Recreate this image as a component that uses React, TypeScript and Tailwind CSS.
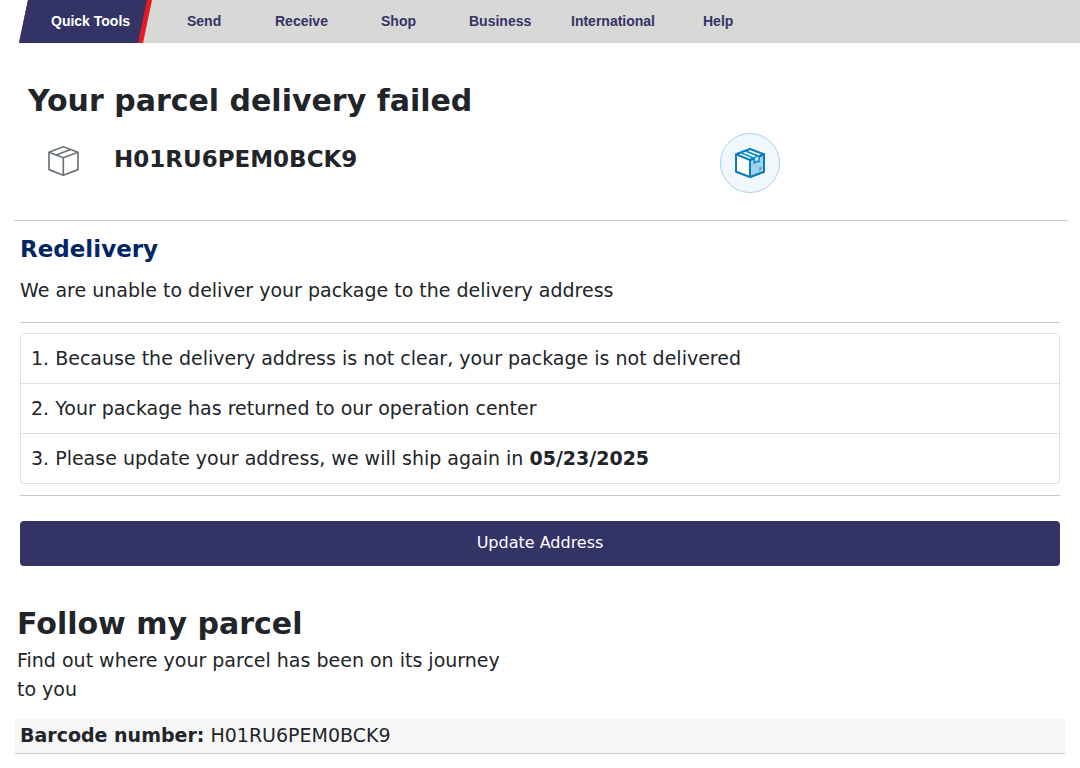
import React from "react";

const trackingNumber = "H01RU6PEM0BCK9";

const menuItems = ["Send", "Receive", "Shop", "Business", "International", "Help"];

const notices = [
  { id: 1, text: "Because the delivery address is not clear, your package is not delivered" },
  { id: 2, text: "Your package has returned to our operation center" },
  { id: 3, text: "Please update your address, we will ship again in", date: "05/23/2025" },
];

function BoxIcon() {
  return (
    <svg width="32" height="32" viewBox="0 0 32 32" fill="none" stroke="#6c7379" strokeWidth="1.7" strokeLinejoin="round" aria-hidden="true">
      <path d="M16.3 1.7 31 7.2V24.6L16.3 30.2 2 24.6V7.2Z" />
      <path d="M2 7.2 16.3 12.8 31 7.2M16.3 12.8V30.2" />
      <path d="M9.2 10 23.6 4.5" />
    </svg>
  );
}

function ParcelIcon() {
  return (
    <svg width="32" height="32" viewBox="0 0 32 32" fill="none" stroke="#0b7cbb" strokeWidth="2" strokeLinejoin="round" aria-hidden="true">
      <path d="M16 2 30 7.3V24.7L16 30 2 24.7V7.3Z" fill="#fff" />
      <path d="M16 13 30 7.3V24.7L16 30Z" fill="#9ed3ef" />
      <path d="M2 7.3 16 13 30 7.3M16 13V30" />
      <path d="M20.3 11.2V16L22.6 14.4 25 14.6V9.4Z" fill="#e4f4fc" stroke="none" />
      <path d="M6.6 5.7 20.3 11.2V16L22.6 14.4 25 14.6V9.4L11.3 3.9" stroke="#0a90d0" strokeWidth="1.7" />
      <path d="M24.8 21.4 26.8 20.6V22.4L24.8 23.2" stroke="#3c7fae" strokeWidth="0.9" />
    </svg>
  );
}

export default function App() {
  return (
    <div className="bg-white font-['DejaVu_Sans',sans-serif] text-[#212529]">
      {/* top navigation */}
      <nav className="ml-[19px] flex h-[43px] bg-[#d8d8d7] font-['Liberation_Sans',Arial,sans-serif] text-sm font-bold text-[#333366] [clip-path:polygon(9px_0,100%_0,100%_100%,0_100%)]">
        <a href="#tools" className="w-[133px] bg-[#e71921] text-white [clip-path:polygon(0_0,100%_0,calc(100%-9px)_100%,0_100%)]">
          <span className="mr-[5px] flex h-full items-center bg-[#333366] pb-0.5 pl-8 [clip-path:polygon(0_0,100%_0,calc(100%-9px)_100%,0_100%)]">Quick Tools</span>
        </a>
        <ul className="ml-[35px] grid grid-cols-[88px_106px_88px_102px_132px_auto] items-center pb-0.5">
          {menuItems.map((item) => (
            <li key={item}>
              <a href={`#${item.toLowerCase()}`}>{item}</a>
            </li>
          ))}
        </ul>
      </nav>

      {/* parcel status */}
      <header className="mr-3 ml-3.5 border-b border-[#c8c8c8] pt-9">
        <h1 className="pl-3.5 text-3xl leading-[44px] font-bold">Your parcel delivery failed</h1>
        <div className="grid grid-cols-[67%_1fr] pt-2.5 pb-[27px]">
          <div className="flex h-[60px] pl-[33px]">
            <div className="pt-3">
              <BoxIcon />
            </div>
            <p className="pt-2 pl-[35px] text-[23px] leading-9 font-bold">{trackingNumber}</p>
          </div>
          <div className="flex size-[60px] items-center justify-center rounded-full border border-[#a9d4ea] bg-[#f1f8fd]">
            <ParcelIcon />
          </div>
        </div>
      </header>

      <main>
        {/* redelivery */}
        <section className="px-5 pt-3">
          <h2 className="text-[23px] leading-8 font-bold text-[#002664]">Redelivery</h2>
          <p className="mt-[11px] border-b border-[#c8c8c8] pb-[18px] text-[19px] leading-[28px]">We are unable to deliver your package to the delivery address</p>
          <ol className="mt-2.5 divide-y divide-[#dfdfdf] rounded border border-[#dfdfdf]">
            {notices.map((notice) => (
              <li key={notice.id} className="px-2.5 py-2.5 text-[19px] leading-[29px]">
                {notice.id}. {notice.text} {notice.date && <strong>{notice.date}</strong>}
              </li>
            ))}
          </ol>
          <hr className="mt-[11px] border-[#c8c8c8]" />
          <button type="button" className="mt-[25px] h-[45px] w-full rounded bg-[#333366] pb-0.5 text-base text-white">
            Update Address
          </button>
        </section>

        {/* tracking */}
        <section className="px-[15px] pt-9 pb-3.5">
          <div className="max-w-[500px] pl-0.5">
            <h2 className="text-3xl leading-[44px] font-bold">Follow my parcel</h2>
            <p className="text-[19px] leading-[29px]">Find out where your parcel has been on its journey to you</p>
          </div>
          <p className="mt-[15px] border-b border-[#c8c8c8] bg-[#f7f7f7] px-[5px] pt-0.5 pb-[3px] text-[19px] leading-[29px]">
            <strong>Barcode number:</strong> {trackingNumber}
          </p>
        </section>
      </main>
    </div>
  );
}
